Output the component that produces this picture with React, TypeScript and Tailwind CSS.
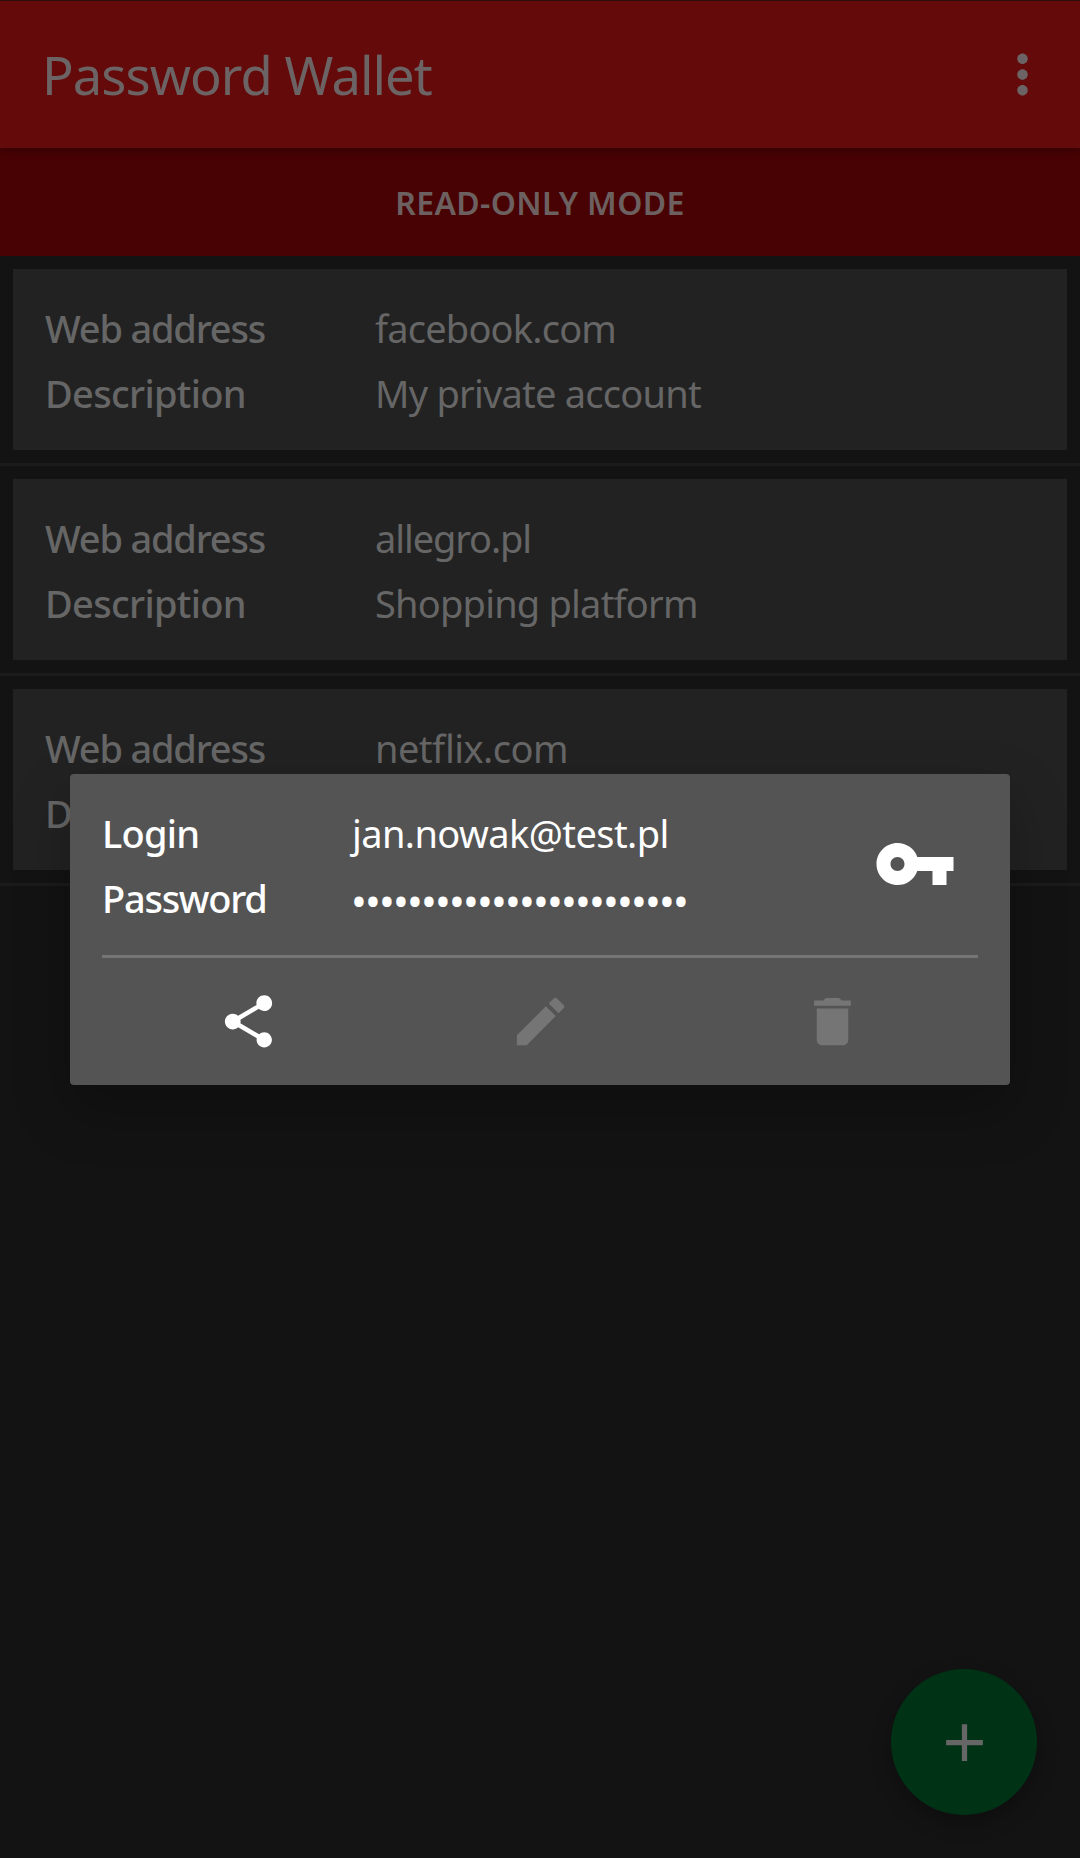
import { MdAdd, MdDelete, MdEdit, MdMoreVert, MdShare, MdVpnKey } from "react-icons/md";

type Entry = {
  address: string;
  addressTracking: string;
  description: string;
  descriptionTracking: string;
};

const entries: Entry[] = [
  {
    address: "facebook.com",
    addressTracking: "tracking-[-0.8px]",
    description: "My private account",
    descriptionTracking: "tracking-[-0.77px]",
  },
  {
    address: "allegro.pl",
    addressTracking: "tracking-[-1.1px]",
    description: "Shopping platform",
    descriptionTracking: "tracking-[-0.79px]",
  },
  {
    address: "netflix.com",
    addressTracking: "tracking-[-0.55px]",
    description: "",
    descriptionTracking: "",
  },
];

function EntryCard({ entry }: { entry: Entry }) {
  return (
    <li className="h-[210px] border-b-[3px] border-[#1b1b1b] px-[13px] py-[13px]">
      <dl className="grid h-[181px] grid-cols-[330px_1fr] content-start bg-[#222222] pt-[27px] pl-8 text-[38px] leading-[65px] text-[#666666]">
        <dt className="font-medium tracking-[-1.2px]">Web address</dt>
        <dd className={entry.addressTracking}>{entry.address}</dd>
        <dt className="font-medium tracking-[-0.68px]">Description</dt>
        <dd className={entry.descriptionTracking}>{entry.description}</dd>
      </dl>
    </li>
  );
}

function CredentialsDialog() {
  return (
    <div role="dialog" className="h-[311px] w-[940px] rounded-[4px] bg-[#545454] px-8 text-white shadow-[0_24px_56px_rgba(0,0,0,0.26)]">
      <div className="flex h-[181px] items-start justify-between">
        <dl className="grid grid-cols-[250px_1fr] pt-[27px] text-[38px] leading-[65px]">
          <dt className="font-medium tracking-[-0.8px]">Login</dt>
          <dd className="tracking-[-0.58px]">jan.nowak@test.pl</dd>
          <dt className="font-medium tracking-[-1.25px]">Password</dt>
          <dd className="-ml-px h-[65px] pt-[2px] text-[42px] tracking-[-1.79px]">{"•".repeat(24)}</dd>
        </dl>
        <MdVpnKey className="mt-12 mr-[21px] size-[84px]" />
      </div>
      <div className="grid h-[130px] grid-cols-3 place-items-center border-t-[3px] border-[#757575]">
        <MdShare className="size-[63px]" />
        <MdEdit className="size-[63px] text-[#757575]" />
        <MdDelete className="size-[63px] text-[#757575]" />
      </div>
    </div>
  );
}

export default function App() {
  return (
    <div className="relative h-[1858px] w-[1080px] overflow-hidden bg-[#131313] font-['Noto_Sans',sans-serif] [font-feature-settings:'liga'_1]">
      <header className="relative flex h-[148px] items-center justify-between border-t border-[#2c0b0b] bg-[#640a0a] pr-[26px] pl-[42px] text-[#6c6464] shadow-[0_2px_8px_rgba(0,0,0,0.35)]">
        <h1 className="text-[52.5px] leading-[72px] tracking-[-0.95px]">Password Wallet</h1>
        <MdMoreVert className="size-[63px]" />
      </header>
      <div className="flex h-[108px] items-center justify-center bg-[#480203] pt-[2px] text-[32px] font-semibold tracking-[0.35px] text-[#6c6060]">
        READ-ONLY MODE
      </div>
      <ul>
        {entries.map((entry) => (
          <EntryCard key={entry.address} entry={entry} />
        ))}
      </ul>
      <button className="absolute right-[43px] bottom-[43px] flex size-[146px] items-center justify-center rounded-full bg-[#003216] text-[#666666] shadow-[0_8px_20px_rgba(0,0,0,0.28)]">
        <MdAdd className="size-[63px]" />
      </button>
      <div className="absolute inset-0 flex items-center justify-center pt-px">
        <CredentialsDialog />
      </div>
    </div>
  );
}
